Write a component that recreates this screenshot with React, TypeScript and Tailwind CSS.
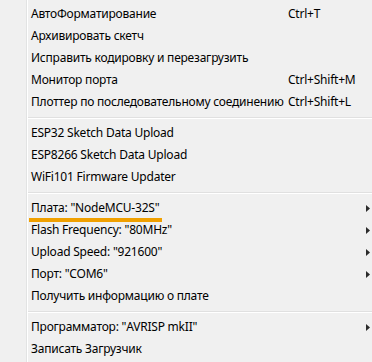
import React from 'react';

type Item =
    | { kind: 'item'; label: string; shortcut?: string; sub?: boolean; mark?: boolean }
    | { kind: 'sep' };

const items: Item[] = [
    { kind: 'item', label: 'АвтоФорматирование', shortcut: 'Ctrl+T' },
    { kind: 'item', label: 'Архивировать скетч' },
    { kind: 'item', label: 'Исправить кодировку и перезагрузить' },
    { kind: 'item', label: 'Монитор порта', shortcut: 'Ctrl+Shift+M' },
    { kind: 'item', label: 'Плоттер по последовательному соединению', shortcut: 'Ctrl+Shift+L' },
    { kind: 'sep' },
    { kind: 'item', label: 'ESP32 Sketch Data Upload' },
    { kind: 'item', label: 'ESP8266 Sketch Data Upload' },
    { kind: 'item', label: 'WiFi101 Firmware Updater' },
    { kind: 'sep' },
    { kind: 'item', label: 'Плата: "NodeMCU-32S"', sub: true, mark: true },
    { kind: 'item', label: 'Flash Frequency: "80MHz"', sub: true },
    { kind: 'item', label: 'Upload Speed: "921600"', sub: true },
    { kind: 'item', label: 'Порт: "COM6"', sub: true },
    { kind: 'item', label: 'Получить информацию о плате' },
    { kind: 'sep' },
    { kind: 'item', label: 'Программатор: "AVRISP mkII"', sub: true },
    { kind: 'item', label: 'Записать Загрузчик' },
];

function Arrow() {
    return (
        <svg width="4" height="7" viewBox="0 0 4 7" className="block">
            <path d="M0 0 L4 3.5 L0 7 Z" fill="#2b2b2b" />
        </svg>
    );
}

export default function App() {
    return (
        <div
            className="w-[372px] h-[362px] bg-[#f0f0f0] text-black text-[12px] tracking-[-0.22px] overflow-hidden flex"
            style={{ fontFamily: '"Noto Sans", "Open Sans", sans-serif' }}
        >
            {/* icon gutter */}
            <div className="w-[27px] shrink-0 border-r border-[#e2e3e3]" />
            <div className="w-px shrink-0 bg-white" />
            <div className="flex-1 flex flex-col pt-[3px]">
                {items.map((it, i) =>
                    it.kind === 'sep' ? (
                        <div key={i} className="h-[9px] flex flex-col pt-[4px]">
                            <div className="h-px bg-[#e0e0e0]" />
                            <div className="h-px bg-white" />
                        </div>
                    ) : (
                        <div key={i} className="relative h-[22px] flex items-center pl-[3px] pr-[2px]">
                            <span className="w-[257px] shrink-0 whitespace-nowrap">{it.label}</span>
                            {it.shortcut && <span className="whitespace-nowrap">{it.shortcut}</span>}
                            {it.sub && (
                                <span className="ml-auto">
                                    <Arrow />
                                </span>
                            )}
                            {it.mark && (
                                <div className="absolute left-[1px] top-[21px] w-[133px] h-[4px] bg-[#f0a000]" />
                            )}
                        </div>
                    )
                )}
            </div>
        </div>
    );
}
